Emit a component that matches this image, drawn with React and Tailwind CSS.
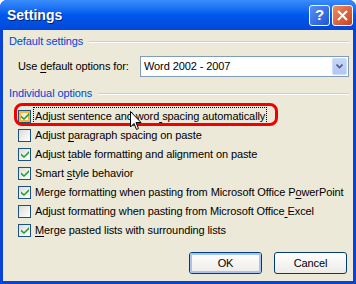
import React from 'react'

const font = { fontFamily: '"Liberation Sans", Arial, sans-serif' }

function Check({ checked, hover }) {
  return (
    <div className="w-[13px] h-[13px] border border-[#1C5180] bg-gradient-to-br from-[#DCDCD7] to-white flex items-center justify-center shrink-0">
      <div className={`w-[11px] h-[11px] flex items-center justify-center ${hover ? 'border-2 border-[#F8B636]' : ''}`}>
        {checked && (
          <svg width="8" height="7" viewBox="0 0 8 7" className="shrink-0">
            <path d="M0 2.5 L3 5 L8 0 L8 2.3 L3 7 L0 4.5 Z" fill="#21A121" />
          </svg>
        )}
      </div>
    </div>
  )
}

function Label({ text, u }) {
  // u = index of the mnemonic character
  return (
    <span>
      {text.slice(0, u)}
      <span className="underline underline-offset-[2px]">{text[u]}</span>
      {text.slice(u + 1)}
    </span>
  )
}

function Group({ title }) {
  return (
    <div className="flex items-center gap-[6px] h-[13px]">
      <span className="text-[#0046D5] whitespace-nowrap">{title}</span>
      <div className="flex-1 h-[2px] border-t border-[#D0D0BF] border-b border-b-white" />
    </div>
  )
}

function Button({ label, isDefault }) {
  return (
    <div className="w-[73px] h-[22px] rounded-[3px] border border-[#003C74] bg-gradient-to-b from-white to-[#ECEBE6] flex items-center justify-center">
      <div className={`w-full h-full rounded-[2px] flex items-center justify-center ${isDefault ? 'border-2 border-[#A8C3F0]' : ''}`}>
        {label}
      </div>
    </div>
  )
}

export default function App() {
  const options = [
    { text: 'Adjust sentence and word spacing automatically', u: 24, checked: true },
    { text: 'Adjust paragraph spacing on paste', u: 7, checked: false },
    { text: 'Adjust table formatting and alignment on paste', u: 7, checked: true },
    { text: 'Smart style behavior', u: 6, checked: true },
    { text: 'Merge formatting when pasting from Microsoft Office PowerPoint', u: 53, checked: true },
    { text: 'Adjust formatting when pasting from Microsoft Office Excel', u: 52, checked: false },
    { text: 'Merge pasted lists with surrounding lists', u: 0, checked: true },
  ]

  return (
    <div className="w-[356px] h-[284px] bg-[#0842D6] rounded-t-[7px] flex flex-col overflow-hidden text-[11px] tracking-[-0.1px] text-black" style={font}>
      {/* Title bar */}
      <div className="h-[30px] shrink-0 bg-gradient-to-b from-[#3A8DFB] via-[#0058EE] to-[#0048D8] flex items-center pl-[7px] pr-[3px]">
        <span className="flex-1 text-white font-bold text-[14px] tracking-normal [text-shadow:1px_1px_0_#0A1E6E]">Settings</span>
        <div className="flex gap-[2px] items-center">
          <div className="w-[21px] h-[21px] rounded-[3px] border border-white bg-gradient-to-br from-[#5A8EF5] to-[#1F55D6] flex items-center justify-center text-white font-bold text-[15px]">?</div>
          <div className="w-[21px] h-[21px] rounded-[3px] border border-white bg-gradient-to-br from-[#F08A60] to-[#C8401A] flex items-center justify-center">
            <svg width="11" height="11" viewBox="0 0 11 11">
              <path d="M1 1 L10 10 M10 1 L1 10" stroke="white" strokeWidth="2" />
            </svg>
          </div>
        </div>
      </div>

      {/* Body */}
      <div className="flex-1 mx-[3px] mb-[3px] bg-[#ECE9D8] relative flex flex-col px-[6px] pt-[5px] pr-[4px]">
        <Group title="Default settings" />
        <div className="flex items-center mt-[8px] pl-[9px] h-[21px]">
          <span className="w-[122px]"><Label text="Use default options for:" u={4} /></span>
          <div className="flex-1 h-[21px] border border-[#7F9DB9] bg-white flex items-center pl-[3px] pr-[1px]">
            <span className="flex-1">Word 2002 - 2007</span>
            <div className="w-[15px] h-[17px] rounded-[2px] bg-gradient-to-b from-[#C6D6FA] to-[#B0C8F5] border border-[#D0DCF8] flex items-center justify-center">
              <svg width="7" height="5" viewBox="0 0 7 5">
                <path d="M0.5 0.5 L3.5 3.5 L6.5 0.5" fill="none" stroke="#4D6185" strokeWidth="1.6" />
              </svg>
            </div>
          </div>
        </div>
        <div className="mt-[10px]">
          <Group title="Individual options" />
        </div>
        <div className="flex flex-col mt-[7px] pl-[9px]">
          {options.map((o, i) => (
            <div key={i} className="flex items-center h-[19px] gap-[3px]">
              <Check checked={o.checked} hover={i === 0} />
              <span className={`whitespace-nowrap px-[1px] ${i === 0 ? 'outline outline-1 outline-dotted outline-black' : ''}`}>
                <Label text={o.text} u={o.u} />
              </span>
            </div>
          ))}
        </div>
        <div className="flex justify-end gap-[12px] mt-auto mb-[7px] pr-[2px]">
          <Button label="OK" isDefault />
          <Button label="Cancel" />
        </div>

        {/* red highlight */}
        <div className="absolute left-[11px] top-[73px] w-[264px] h-[23px] border-[3px] border-[#F00000] rounded-[8px] pointer-events-none" />

        {/* mouse pointer */}
        <svg className="absolute left-[127px] top-[81px]" width="13" height="20" viewBox="0 0 13 20">
          <path d="M0.5 0.5 L0.5 16 L4 12.5 L6.5 18.5 L8.5 17.5 L6 11.5 L11 11.5 Z" fill="white" stroke="black" strokeWidth="1" />
        </svg>
      </div>
    </div>
  )
}
